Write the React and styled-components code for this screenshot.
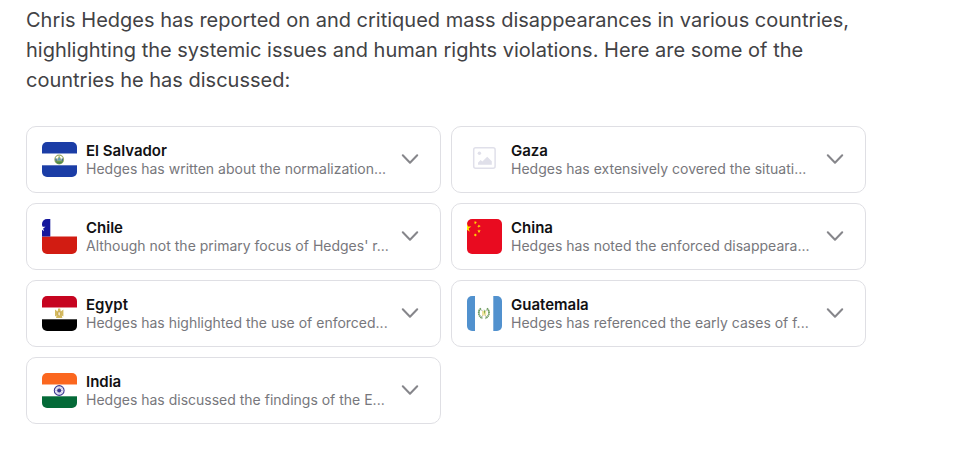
import React, { useState } from 'react'
import styled, { createGlobalStyle } from 'styled-components'

const STAR = 'M0 -1 L0.225 -0.309 L0.951 -0.309 L0.363 0.118 L0.588 0.809 L0 0.382 L-0.588 0.809 L-0.363 0.118 L-0.951 -0.309 L-0.225 -0.309 Z'

function Star({ x, y, r, color, turn = 0 }) {
    return <path d={STAR} fill={color} transform={`translate(${x} ${y}) rotate(${turn}) scale(${r})`} />
}

function Stripes({ colors, vertical, first = 11.7, second = 23.3 }) {
    const stops = [0, first, second, 35]
    return colors.map((c, i) => {
        const start = stops[i]
        const size = stops[i + 1] - start
        return vertical
            ? <rect key={i} x={start} y="0" width={size} height="35" fill={c} />
            : <rect key={i} x="0" y={start} width="35" height={size} fill={c} />
    })
}

const flags = {
    elSalvador: (
        <>
            <Stripes colors={['#1b3da6', '#ffffff', '#1b3da6']} />
            <circle cx="17.2" cy="17.5" r="4.3" fill="none" stroke="#9cab68" strokeWidth="1.2" />
            <path d="M13.2 16 a4.3 4.3 0 0 0 8 0 l-0.4 4 a4.3 4.3 0 0 1 -7.2 0 z" fill="#4d8a4b" />
            <path d="M14.4 19 L17.2 14 L20 19 Z" fill="#5f9fb0" stroke="#c9bd4b" strokeWidth="0.6" />
            <path d="M14.2 16.4 v2.4 M20.2 16.4 v2.4" stroke="#3158ad" strokeWidth="1" />
        </>
    ),
    chile: (
        <>
            <rect width="35" height="35" fill="#ffffff" />
            <rect y="17.5" width="35" height="17.5" fill="#d21c12" />
            <rect width="8.3" height="17.5" fill="#15179c" />
            <Star x={-0.3} y={9} r={4} color="#ffffff" />
        </>
    ),
    egypt: (
        <>
            <Stripes colors={['#c60420', '#ffffff', '#000000']} />
            <path d="M13 13.4 L15.6 15.6 L16.2 12.6 H18.2 L18.8 15.6 L21.4 13.4 V20.6 L19.8 19.4 L20.4 22 H14 L14.6 19.4 L13 20.6 Z" fill="#d3b95f" />
            <path d="M16 16 h2.4 v3 l-1.2 1 l-1.2 -1 z" fill="#f4ead0" stroke="#b68e31" strokeWidth="0.5" />
        </>
    ),
    india: (
        <>
            <Stripes colors={['#fb671f', '#ffffff', '#046a38']} />
            <circle cx="17.2" cy="17.5" r="4.9" fill="#e6e6f5" stroke="#38358e" strokeWidth="1.1" />
            <path d="M17.2 13 v9 M12.7 17.5 h9 M14 14.3 l6.4 6.4 M20.4 14.3 l-6.4 6.4" stroke="#a5a3d0" strokeWidth="0.5" />
            <circle cx="17.2" cy="17.5" r="2" fill="#38358e" />
        </>
    ),
    china: (
        <>
            <rect width="35" height="35" fill="#e90b20" />
            <Star x={0} y={9} r={4.6} color="#ffee00" />
            <Star x={8.4} y={3.6} r={1.9} color="#ffe000" turn={24} />
            <Star x={12} y={7.2} r={1.9} color="#ffe000" turn={46} />
            <Star x={12} y={12.2} r={1.9} color="#ffe000" />
            <Star x={8.4} y={16} r={1.9} color="#ffe000" turn={20} />
        </>
    ),
    guatemala: (
        <>
            <Stripes vertical first={8} second={26.3} colors={['#5191ce', '#ffffff', '#5191ce']} />
            <path d="M14 12.4 C10.4 15 11.4 20.4 15.4 22.4 M19.8 12.4 C23.4 15 22.4 20.4 18.4 22.4" fill="none" stroke="#6c9b5d" strokeWidth="1.8" strokeDasharray="1.5 0.4" />
            <path d="M14.6 14 L19.4 21 M19.4 14 L14.6 21" stroke="#8f9088" strokeWidth="0.8" />
            <path d="M15 15 h4.2 v4.6 h-4.2 z" fill="#efe3a0" />
            <path d="M16.8 13 l1.5 2.4 l-1.2 3 z" fill="#7cab48" />
        </>
    ),
    none: (
        <>
            <rect x="6.7" y="5.8" width="21.4" height="20.4" rx="2" fill="none" stroke="#e0e0ea" strokeWidth="1.5" />
            <circle cx="12.4" cy="11.2" r="1.7" fill="#e0e0ea" />
            <path d="M11 22.8 V20.8 L13.6 18 L15.4 19.6 L20.2 14.8 L24.8 19.2 V22.8 Z" fill="#e0e0ea" />
        </>
    ),
}

const countries = [
    { name: 'El Salvador', flag: 'elSalvador', text: 'Hedges has written about the normalization...' },
    { name: 'Gaza', flag: 'none', text: 'Hedges has extensively covered the situati...' },
    { name: 'Chile', flag: 'chile', text: "Although not the primary focus of Hedges' r..." },
    { name: 'China', flag: 'china', text: 'Hedges has noted the enforced disappeara...' },
    { name: 'Egypt', flag: 'egypt', text: 'Hedges has highlighted the use of enforced...' },
    { name: 'Guatemala', flag: 'guatemala', text: 'Hedges has referenced the early cases of f...' },
    { name: 'India', flag: 'india', text: 'Hedges has discussed the findings of the E...' },
]

function CountryCard({ name, flag, text }) {
    const [open, setOpen] = useState(false)

    return (
        <Card type="button" aria-expanded={open} onClick={() => setOpen(!open)}>
            <Flag viewBox="0 0 35 35" aria-hidden="true">{flags[flag]}</Flag>
            <CardText>
                <Name>{name}</Name>
                <Summary $open={open}>{text}</Summary>
            </CardText>
            <Chevron viewBox="0 0 18 12" $open={open} aria-hidden="true">
                <path d="M1.8 1.2 L9 8.8 L16.2 1.2" />
            </Chevron>
        </Card>
    )
}

function App() {
    return (
        <>
            <GlobalStyle />
            <Answer>
                <Intro>
                    Chris Hedges has reported on and critiqued mass disappearances in various countries,
                    highlighting the systemic issues and human rights violations. Here are some of the
                    countries he has discussed:
                </Intro>
                <CardGrid>
                    {countries.map((c) => <CountryCard key={c.name} {...c} />)}
                </CardGrid>
            </Answer>
        </>
    )
}

export default App

const GlobalStyle = createGlobalStyle`
    * {
        box-sizing: border-box;
    }
    body {
        margin: 0;
        background: #ffffff;
        font-family: Inter, "Liberation Sans", sans-serif;
    }
`

const Answer = styled.main`
    max-width: 892px;
    padding: 5px 26px 24px;
`

const Intro = styled.p`
    margin: 0 0 31px;
    color: #424245;
    font-size: 20px;
    line-height: 30px;
`

const CardGrid = styled.div`
    display: grid;
    grid-template-columns: repeat(2, minmax(0, 1fr));
    gap: 10px;
    @media (max-width: 640px) {
        grid-template-columns: minmax(0, 1fr);
    }
`

const Card = styled.button`
    display: flex;
    align-items: center;
    padding: 14px 21px 14px 15px;
    border: 1px solid #dfdfe4;
    border-radius: 10px;
    background: #ffffff;
    font-family: inherit;
    text-align: left;
    cursor: pointer;
`

const Flag = styled.svg`
    flex: none;
    width: 35px;
    height: 35px;
    border-radius: 5px;
`

const CardText = styled.span`
    flex: 1;
    min-width: 0;
    margin: 0 9px;
`

const Name = styled.span`
    display: block;
    color: #111113;
    font-size: 15px;
    font-weight: 600;
    line-height: 19px;
`

const Summary = styled.span`
    display: block;
    overflow: hidden;
    color: #77777c;
    font-size: 14px;
    line-height: 18px;
    text-overflow: ellipsis;
    white-space: ${props => props.$open ? 'normal' : 'nowrap'};
`

const Chevron = styled.svg`
    flex: none;
    width: 18px;
    height: 12px;
    fill: none;
    stroke: #86868b;
    stroke-width: 2;
    stroke-linecap: round;
    stroke-linejoin: round;
    transform: ${props => props.$open ? 'rotate(180deg)' : 'none'};
`
